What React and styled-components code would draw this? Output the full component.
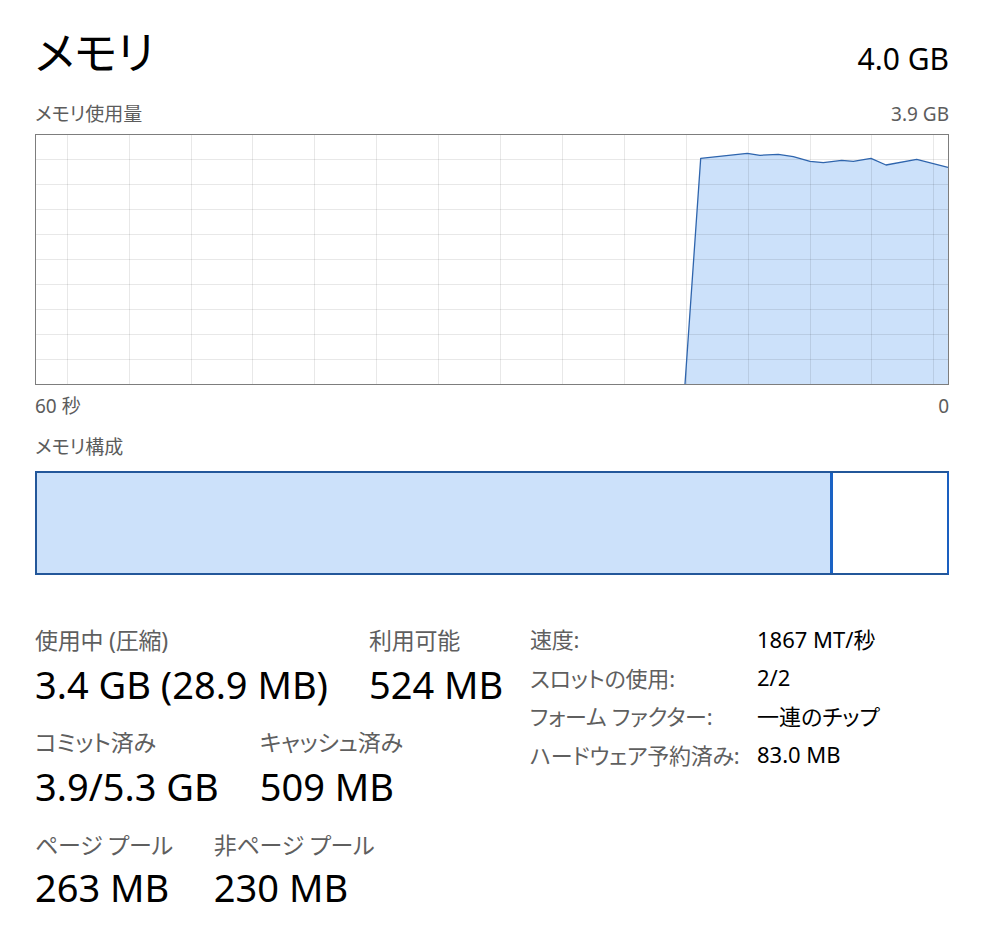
import React from "react";
import styled, { createGlobalStyle } from "styled-components";

const GlobalStyle = createGlobalStyle`
  html, body { margin: 0; padding: 0; background: #ffffff; }
  body {
    font-family: "Noto Sans", "Noto Sans CJK JP", sans-serif;
    font-feature-settings: "palt";
    color: #000;
    -webkit-font-smoothing: antialiased;
  }
`;

const Page = styled.div`
  width: 914px;
  padding: 25px 43px 0 35px;
  display: flex;
  flex-direction: column;
`;

const Header = styled.div`
  display: flex;
  justify-content: space-between;
  align-items: baseline;
  height: 57px;
`;

const Title = styled.h1`
  margin: 0;
  font-size: 45px;
  line-height: 56px;
  font-weight: 400;
  color: #000;
`;

const Capacity = styled.div`
  font-size: 30px;
  line-height: 36px;
  color: #000;
`;

const CaptionRow = styled.div`
  display: flex;
  justify-content: space-between;
  margin-top: ${(p) => p.$gap}px;
`;

const Caption = styled.div`
  font-size: 19px;
  line-height: 24px;
  color: #5c5c5c;
  margin-top: ${(p) => p.$gap || 0}px;
`;

const ChartFrame = styled.div`
  margin-top: 8px;
  border: 1px solid #7d7d7d;
  height: 249px;
  background: #fff;
  svg { display: block; }
`;

const CompositionBar = styled.div`
  margin-top: 12px;
  height: 100px;
  border: 2px solid #23579a;
  border-right-color: #1a5fc0;
  display: flex;
  background: #fff;
`;

const InUse = styled.div`
  background: #cce1fa;
  height: 100%;
`;

const Divider = styled.div`
  width: 3px;
  background: #1a62c4;
  height: 100%;
`;

const Stats = styled.div`
  margin-top: 46px;
  display: grid;
  grid-template-columns: 495px 1fr;
  align-items: start;
`;

const StatColumn = styled.div`
  padding-top: 4px;
  display: flex;
  flex-direction: column;
`;

const StatRow = styled.div`
  display: flex;
  gap: 41px;
  margin-top: ${(p) => p.$gap || 0}px;
`;

const Stat = styled.div`
  display: flex;
  flex-direction: column;
`;

const StatLabel = styled.div`
  font-size: 23px;
  line-height: 30px;
  color: #5f5f5f;
  letter-spacing: -0.01em;
  white-space: nowrap;
`;

const StatValue = styled.div`
  margin-top: ${(p) => p.$gap}px;
  font-size: 38px;
  line-height: 44px;
  color: #000;
  white-space: nowrap;
`;

const Details = styled.div`
  margin-top: -2px;
  display: grid;
  grid-template-columns: 227px auto;
  grid-auto-rows: 38.5px;
  align-items: center;
  font-size: 22px;
  white-space: nowrap;
`;

const DetailLabel = styled.div`
  color: #5f5f5f;
  letter-spacing: -0.01em;
`;

const DetailValue = styled.div`
  color: #000;
`;

const W = 912;
const H = 249;

const usage = [
  [649, 249],
  [664.7, 23.3],
  [711.3, 18.3],
  [724, 20.3],
  [742.3, 19.3],
  [757.3, 21.7],
  [774, 26.3],
  [787.3, 27.7],
  [805.7, 25.3],
  [817.3, 26.3],
  [835, 23.3],
  [850, 30],
  [880.7, 24.3],
  [912, 32.3],
];

function UsageChart() {
  const hLines = Array.from({ length: 9 }, (_, k) => 24.5 + 25 * k);
  const vLines = Array.from({ length: 15 }, (_, k) => Math.round(30.7 + 61.9 * k) + 0.5);
  const line = usage.map(([x, y]) => `${x},${y}`).join(" ");
  const area = `${line} ${W},${H} 649,${H}`;
  return (
    <svg width={W} height={H} viewBox={`0 0 ${W} ${H}`}>
      <polygon points={area} fill="#cce1fa" />
      <g stroke="rgba(0,0,0,0.09)" strokeWidth="1" shapeRendering="crispEdges">
        {hLines.map((y) => (
          <line key={`h${y}`} x1="0" x2={W} y1={y} y2={y} />
        ))}
        {vLines.map((x) => (
          <line key={`v${x}`} x1={x} x2={x} y1="0" y2={H} />
        ))}
      </g>
      <polyline points={line} fill="none" stroke="#2f65ad" strokeWidth="1.3" strokeLinejoin="round" />
    </svg>
  );
}

const details = [
  ["速度:", "1867 MT/秒"],
  ["スロットの使用:", "2/2"],
  ["フォーム ファクター:", "一連のチップ"],
  ["ハードウェア予約済み:", "83.0 MB"],
];

export default function App() {
  const inUseGB = 3.4;
  const usableGB = 3.9;
  const inUsePct = (inUseGB / usableGB) * 100;
  return (
    <>
      <GlobalStyle />
      <Page>
        <Header>
          <Title>メモリ</Title>
          <Capacity>4.0 GB</Capacity>
        </Header>

        <CaptionRow $gap={20}>
          <Caption>メモリ使用量</Caption>
          <Caption>3.9 GB</Caption>
        </CaptionRow>
        <ChartFrame>
          <UsageChart />
        </ChartFrame>
        <CaptionRow $gap={9}>
          <Caption>60 秒</Caption>
          <Caption>0</Caption>
        </CaptionRow>

        <Caption $gap={17}>メモリ構成</Caption>
        <CompositionBar>
          <InUse style={{ width: `${inUsePct}%` }} />
          <Divider />
        </CompositionBar>

        <Stats>
          <StatColumn>
            <StatRow>
              <Stat>
                <StatLabel>使用中 (圧縮)</StatLabel>
                <StatValue $gap={7}>3.4 GB (28.9 MB)</StatValue>
              </Stat>
              <Stat>
                <StatLabel>利用可能</StatLabel>
                <StatValue $gap={7}>524 MB</StatValue>
              </Stat>
            </StatRow>
            <StatRow $gap={21}>
              <Stat>
                <StatLabel>コミット済み</StatLabel>
                <StatValue $gap={7}>3.9/5.3 GB</StatValue>
              </Stat>
              <Stat>
                <StatLabel>キャッシュ済み</StatLabel>
                <StatValue $gap={7}>509 MB</StatValue>
              </Stat>
            </StatRow>
            <StatRow $gap={22}>
              <Stat>
                <StatLabel>ページ プール</StatLabel>
                <StatValue $gap={5}>263 MB</StatValue>
              </Stat>
              <Stat>
                <StatLabel>非ページ プール</StatLabel>
                <StatValue $gap={5}>230 MB</StatValue>
              </Stat>
            </StatRow>
          </StatColumn>
          <Details>
            {details.map(([label, value]) => (
              <React.Fragment key={label}>
                <DetailLabel>{label}</DetailLabel>
                <DetailValue>{value}</DetailValue>
              </React.Fragment>
            ))}
          </Details>
        </Stats>
      </Page>
    </>
  );
}
